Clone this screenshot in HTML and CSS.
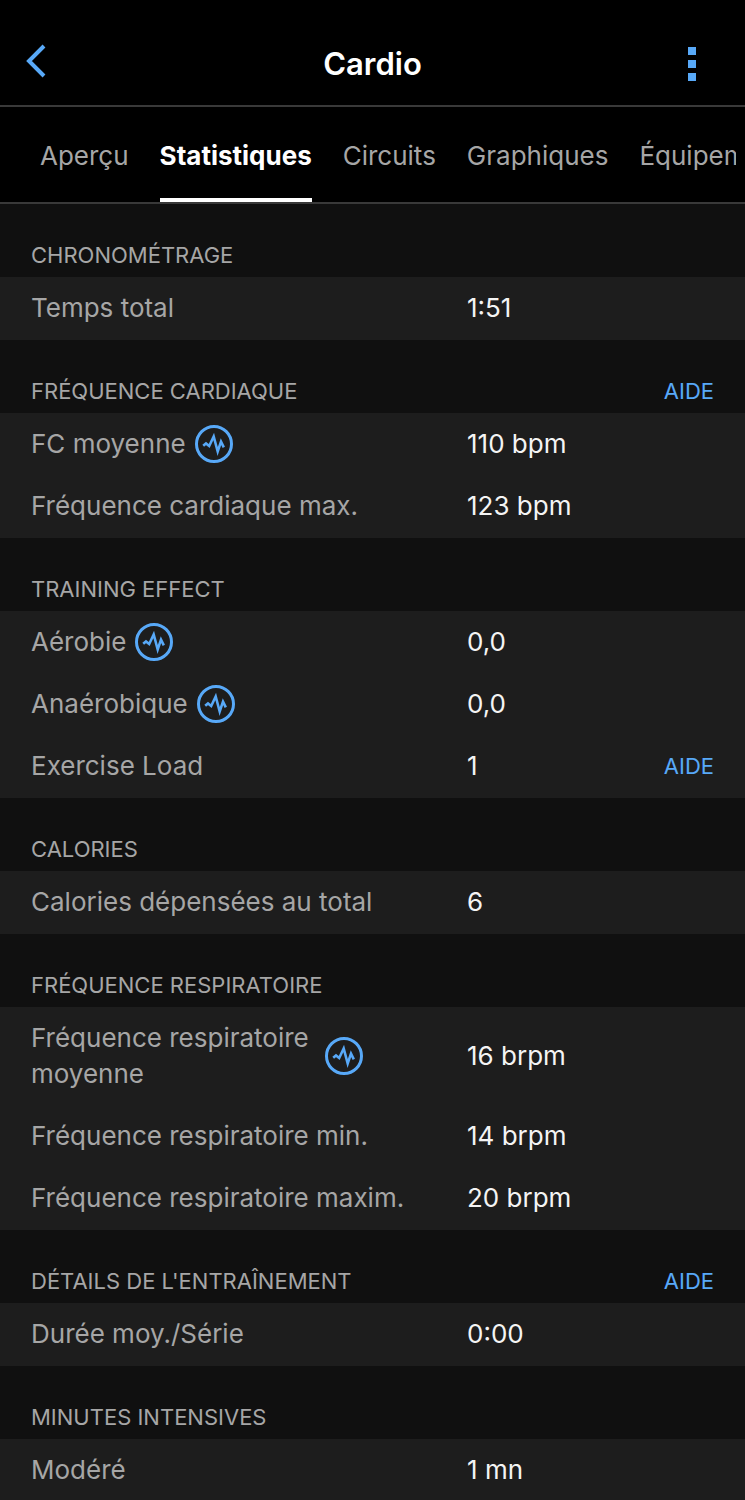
FILE: index.html
```html
<!DOCTYPE html>
<html lang="fr">
<head>
  <meta charset="UTF-8" />
  <meta name="viewport" content="width=device-width, initial-scale=1.0" />
  <title>Cardio - Statistiques</title>
  <link rel="stylesheet" href="styles.css">
</head>
<body>
  <!-- Icône partagée par les boutons de graphique -->
  <svg class="sprite" aria-hidden="true">
    <symbol id="icon-pulse" viewBox="0 0 38 38">
      <circle cx="19" cy="19" r="17.5" stroke-width="3" />
      <path d="M8.2 20.8L11 18.4L14.2 21L18.7 11.5L22.7 26.5L26 16.6L28.8 22.4" stroke-width="2.6" stroke-linejoin="miter" stroke-miterlimit="8" />
    </symbol>
  </svg>

  <header class="top-bar">
    <button class="back" aria-label="Retour">
      <svg width="20" height="40" viewBox="0 0 20 40"><path d="M18 2L3 17L18 32" /></svg>
    </button>
    <h1>Cardio</h1>
    <button class="menu" aria-label="Menu">
      <svg width="8" height="34" viewBox="0 0 8 34"><path d="M0 0h8v8H0zM0 13h8v8H0zM0 26h8v8H0z" /></svg>
    </button>
  </header>

  <div class="tab-bar">
    <nav class="tabs">
      <a href="#apercu">Aperçu</a>
      <a href="#statistiques" class="active" aria-current="page">Statistiques</a>
      <a href="#circuits">Circuits</a>
      <a href="#graphiques">Graphiques</a>
      <a href="#equipement">Équipement</a>
    </nav>
  </div>

  <main id="statistiques">
    <section>
      <div class="section-head"><h2>CHRONOMÉTRAGE</h2></div>
      <dl class="rows">
        <div class="row"><dt>Temps total</dt><dd>1:51</dd></div>
      </dl>
    </section>

    <section>
      <div class="section-head"><h2>FRÉQUENCE CARDIAQUE</h2><a class="help" href="#aide-fc">AIDE</a></div>
      <dl class="rows">
        <div class="row">
          <dt>FC moyenne <button class="chart" aria-label="Graphique FC moyenne"><svg><use href="#icon-pulse" /></svg></button></dt>
          <dd>110 bpm</dd>
        </div>
        <div class="row"><dt>Fréquence cardiaque max.</dt><dd>123 bpm</dd></div>
      </dl>
    </section>

    <section>
      <div class="section-head"><h2>TRAINING EFFECT</h2></div>
      <dl class="rows">
        <div class="row">
          <dt>Aérobie <button class="chart" aria-label="Graphique aérobie"><svg><use href="#icon-pulse" /></svg></button></dt>
          <dd>0,0</dd>
        </div>
        <div class="row">
          <dt>Anaérobique <button class="chart" aria-label="Graphique anaérobique"><svg><use href="#icon-pulse" /></svg></button></dt>
          <dd>0,0</dd>
        </div>
        <div class="row"><dt>Exercise Load</dt><dd>1 <a class="help" href="#aide-load">AIDE</a></dd></div>
      </dl>
    </section>

    <section>
      <div class="section-head"><h2>CALORIES</h2></div>
      <dl class="rows">
        <div class="row"><dt>Calories dépensées au total</dt><dd>6</dd></div>
      </dl>
    </section>

    <section>
      <div class="section-head"><h2>FRÉQUENCE RESPIRATOIRE</h2></div>
      <dl class="rows">
        <div class="row">
          <dt>Fréquence respiratoire moyenne <button class="chart" aria-label="Graphique fréquence respiratoire"><svg><use href="#icon-pulse" /></svg></button></dt>
          <dd>16 brpm</dd>
        </div>
        <div class="row"><dt>Fréquence respiratoire min.</dt><dd>14 brpm</dd></div>
        <div class="row"><dt>Fréquence respiratoire maxim.</dt><dd>20 brpm</dd></div>
      </dl>
    </section>

    <section>
      <div class="section-head"><h2>DÉTAILS DE L'ENTRAÎNEMENT</h2><a class="help" href="#aide-details">AIDE</a></div>
      <dl class="rows">
        <div class="row"><dt>Durée moy./Série</dt><dd>0:00</dd></div>
      </dl>
    </section>

    <section>
      <div class="section-head"><h2>MINUTES INTENSIVES</h2></div>
      <dl class="rows">
        <div class="row"><dt>Modéré</dt><dd>1 mn</dd></div>
      </dl>
    </section>
  </main>
</body>
</html>
```
FILE: styles.css
```css
/* ===== Base ===== */
* { box-sizing: border-box; margin: 0; padding: 0; }
body { font-family: Inter, "Liberation Sans", sans-serif; font-size: 26px; line-height: 36px; background: #101010; color: #a6a6a6; }
a { color: inherit; text-decoration: none; }
button { display: flex; border: none; background: none; cursor: pointer; }
.sprite { display: none; }

/* ===== Barre du haut ===== */
.top-bar { display: grid; grid-template-columns: 1fr auto 1fr; align-items: center; padding: 22px 49px 0 26px; height: 107px; background: #000; border-bottom: 2px solid #393939; }
.top-bar h1 { font-size: 31px; font-weight: 600; line-height: 40px; color: #fff; padding-left: 23px; }
.back svg { fill: none; stroke: #58a9f8; stroke-width: 4; }
.menu { justify-self: end; }
.menu svg { fill: #58a9f8; }

/* ===== Onglets ===== */
.tab-bar { padding: 0 9px; background: #000; border-bottom: 2px solid #393939; }
.tabs { display: flex; gap: 31px; padding-left: 31px; overflow: hidden; white-space: nowrap; }
.tabs a { padding: 31px 0 24px; border-bottom: 4px solid transparent; }
.tabs .active { font-weight: 700; color: #fff; border-color: #fff; }

/* ===== Sections ===== */
.section-head { display: flex; justify-content: space-between; align-items: flex-end; height: 73px; padding: 0 31px 7px; line-height: 30px; }
.section-head h2 { font-size: 22px; font-weight: 400; }
.help { font-size: 22px; color: #58a9f8; }

/* ===== Lignes ===== */
.rows { padding-bottom: 1px; background: #1d1d1d; }
section:last-child .rows { padding-bottom: 0; }
.row { display: grid; grid-template-columns: 436fr 247fr; align-items: center; padding: 13px 31px; }
.row dt { display: flex; align-items: center; padding-right: 60px; }
.row dd { display: flex; justify-content: space-between; color: #f4f4f4; }

/* Bouton graphique */
.chart { flex: none; margin: -1px 44px -1px 9px; }
.chart svg { width: 38px; height: 38px; fill: none; stroke: #58a9f8; }
```
